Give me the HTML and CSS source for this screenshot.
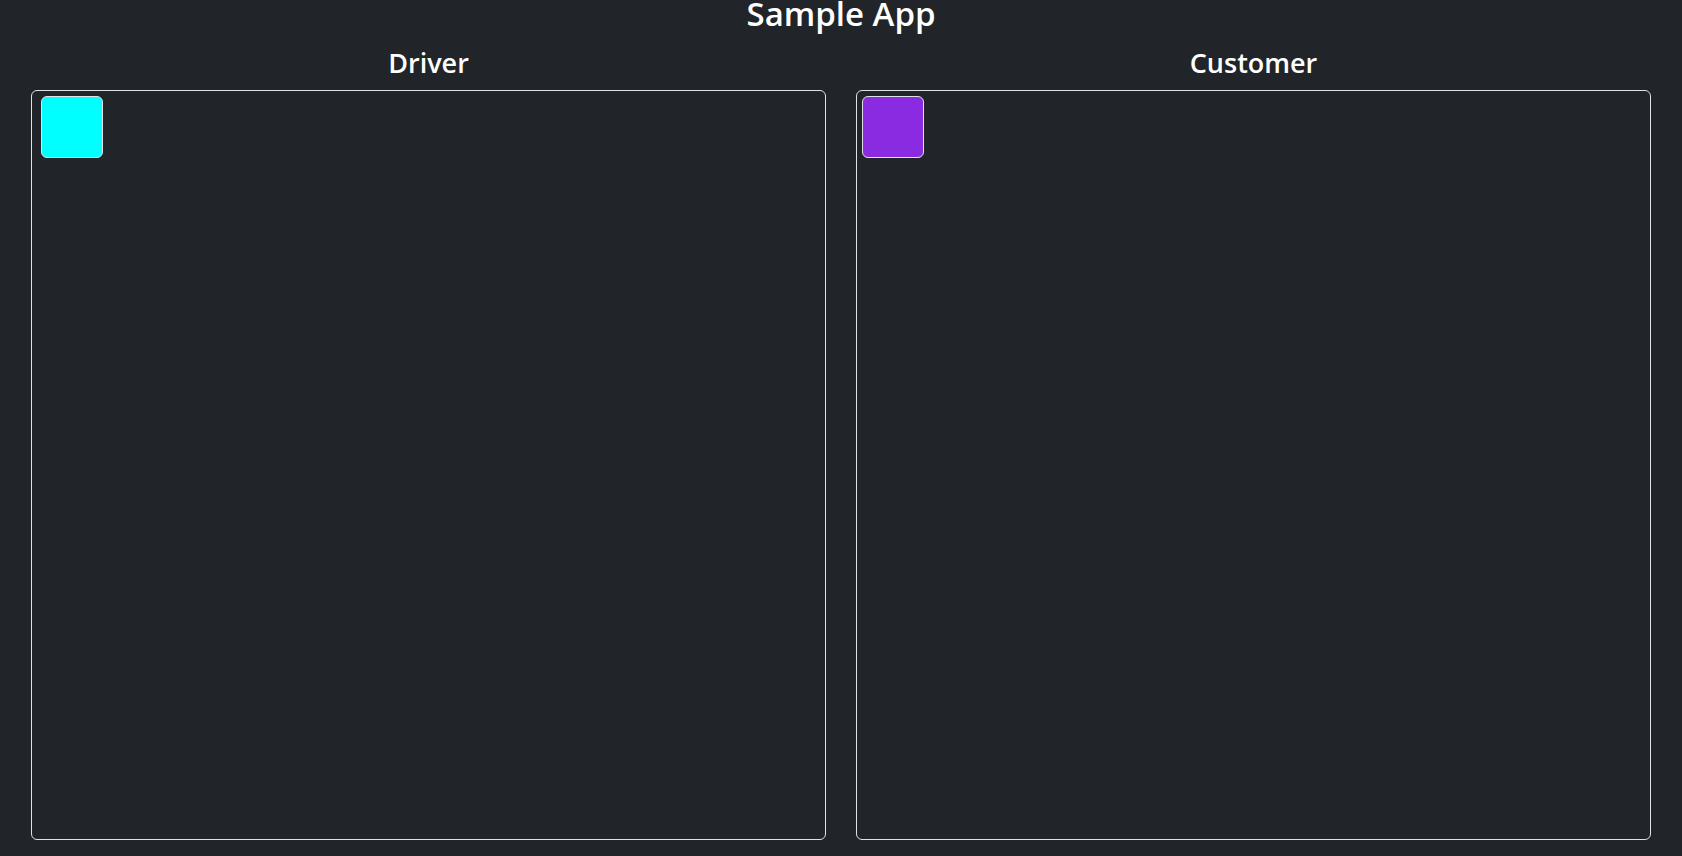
FILE: index.html
```html
<!DOCTYPE html>
<html lang="en">
<head>
<meta charset="utf-8">
<title>Sample App</title>
<link rel="stylesheet" href="styles.css">
</head>
<body>
<h2 class="app-title">Sample App</h2>
<div class="panels">
  <section class="panel">
    <h3 class="panel-title">Driver</h3>
    <div class="canvas">
      <div class="token token-driver"></div>
    </div>
  </section>
  <section class="panel">
    <h3 class="panel-title">Customer</h3>
    <div class="canvas">
      <div class="token token-customer"></div>
    </div>
  </section>
</div>
</body>
</html>
```
FILE: styles.css
```css
html, body {
  margin: 0;
  padding: 0;
  background: #212529;
  color: #ffffff;
  font-family: "Open Sans", "Noto Sans", "Liberation Sans", sans-serif;
  height: 100%;
  overflow: hidden;
}

.app-title {
  margin: 0;
  text-align: center;
  font-size: 33px;
  font-weight: 600;
  line-height: 28px;
}

.panels {
  display: flex;
  gap: 30px;
  padding: 0 31px;
}

.panel {
  flex: 1 1 0;
  display: flex;
  flex-direction: column;
}

.panel-title {
  margin: 15px 0 7px 0;
  text-align: center;
  font-size: 27px;
  font-weight: 600;
  line-height: 40px;
}

.canvas {
  position: relative;
  height: 750px;
  box-sizing: border-box;
  border: 1px solid #dee2e6;
  border-radius: 6px;
}

.token {
  position: absolute;
  top: 5px;
  width: 62px;
  height: 62px;
  box-sizing: border-box;
  border: 1px solid #dee2e6;
  border-radius: 6px;
}

.token-driver {
  left: 9px;
  background: #00ffff;
}

.token-customer {
  left: 5px;
  background: #8a2be2;
}
```
